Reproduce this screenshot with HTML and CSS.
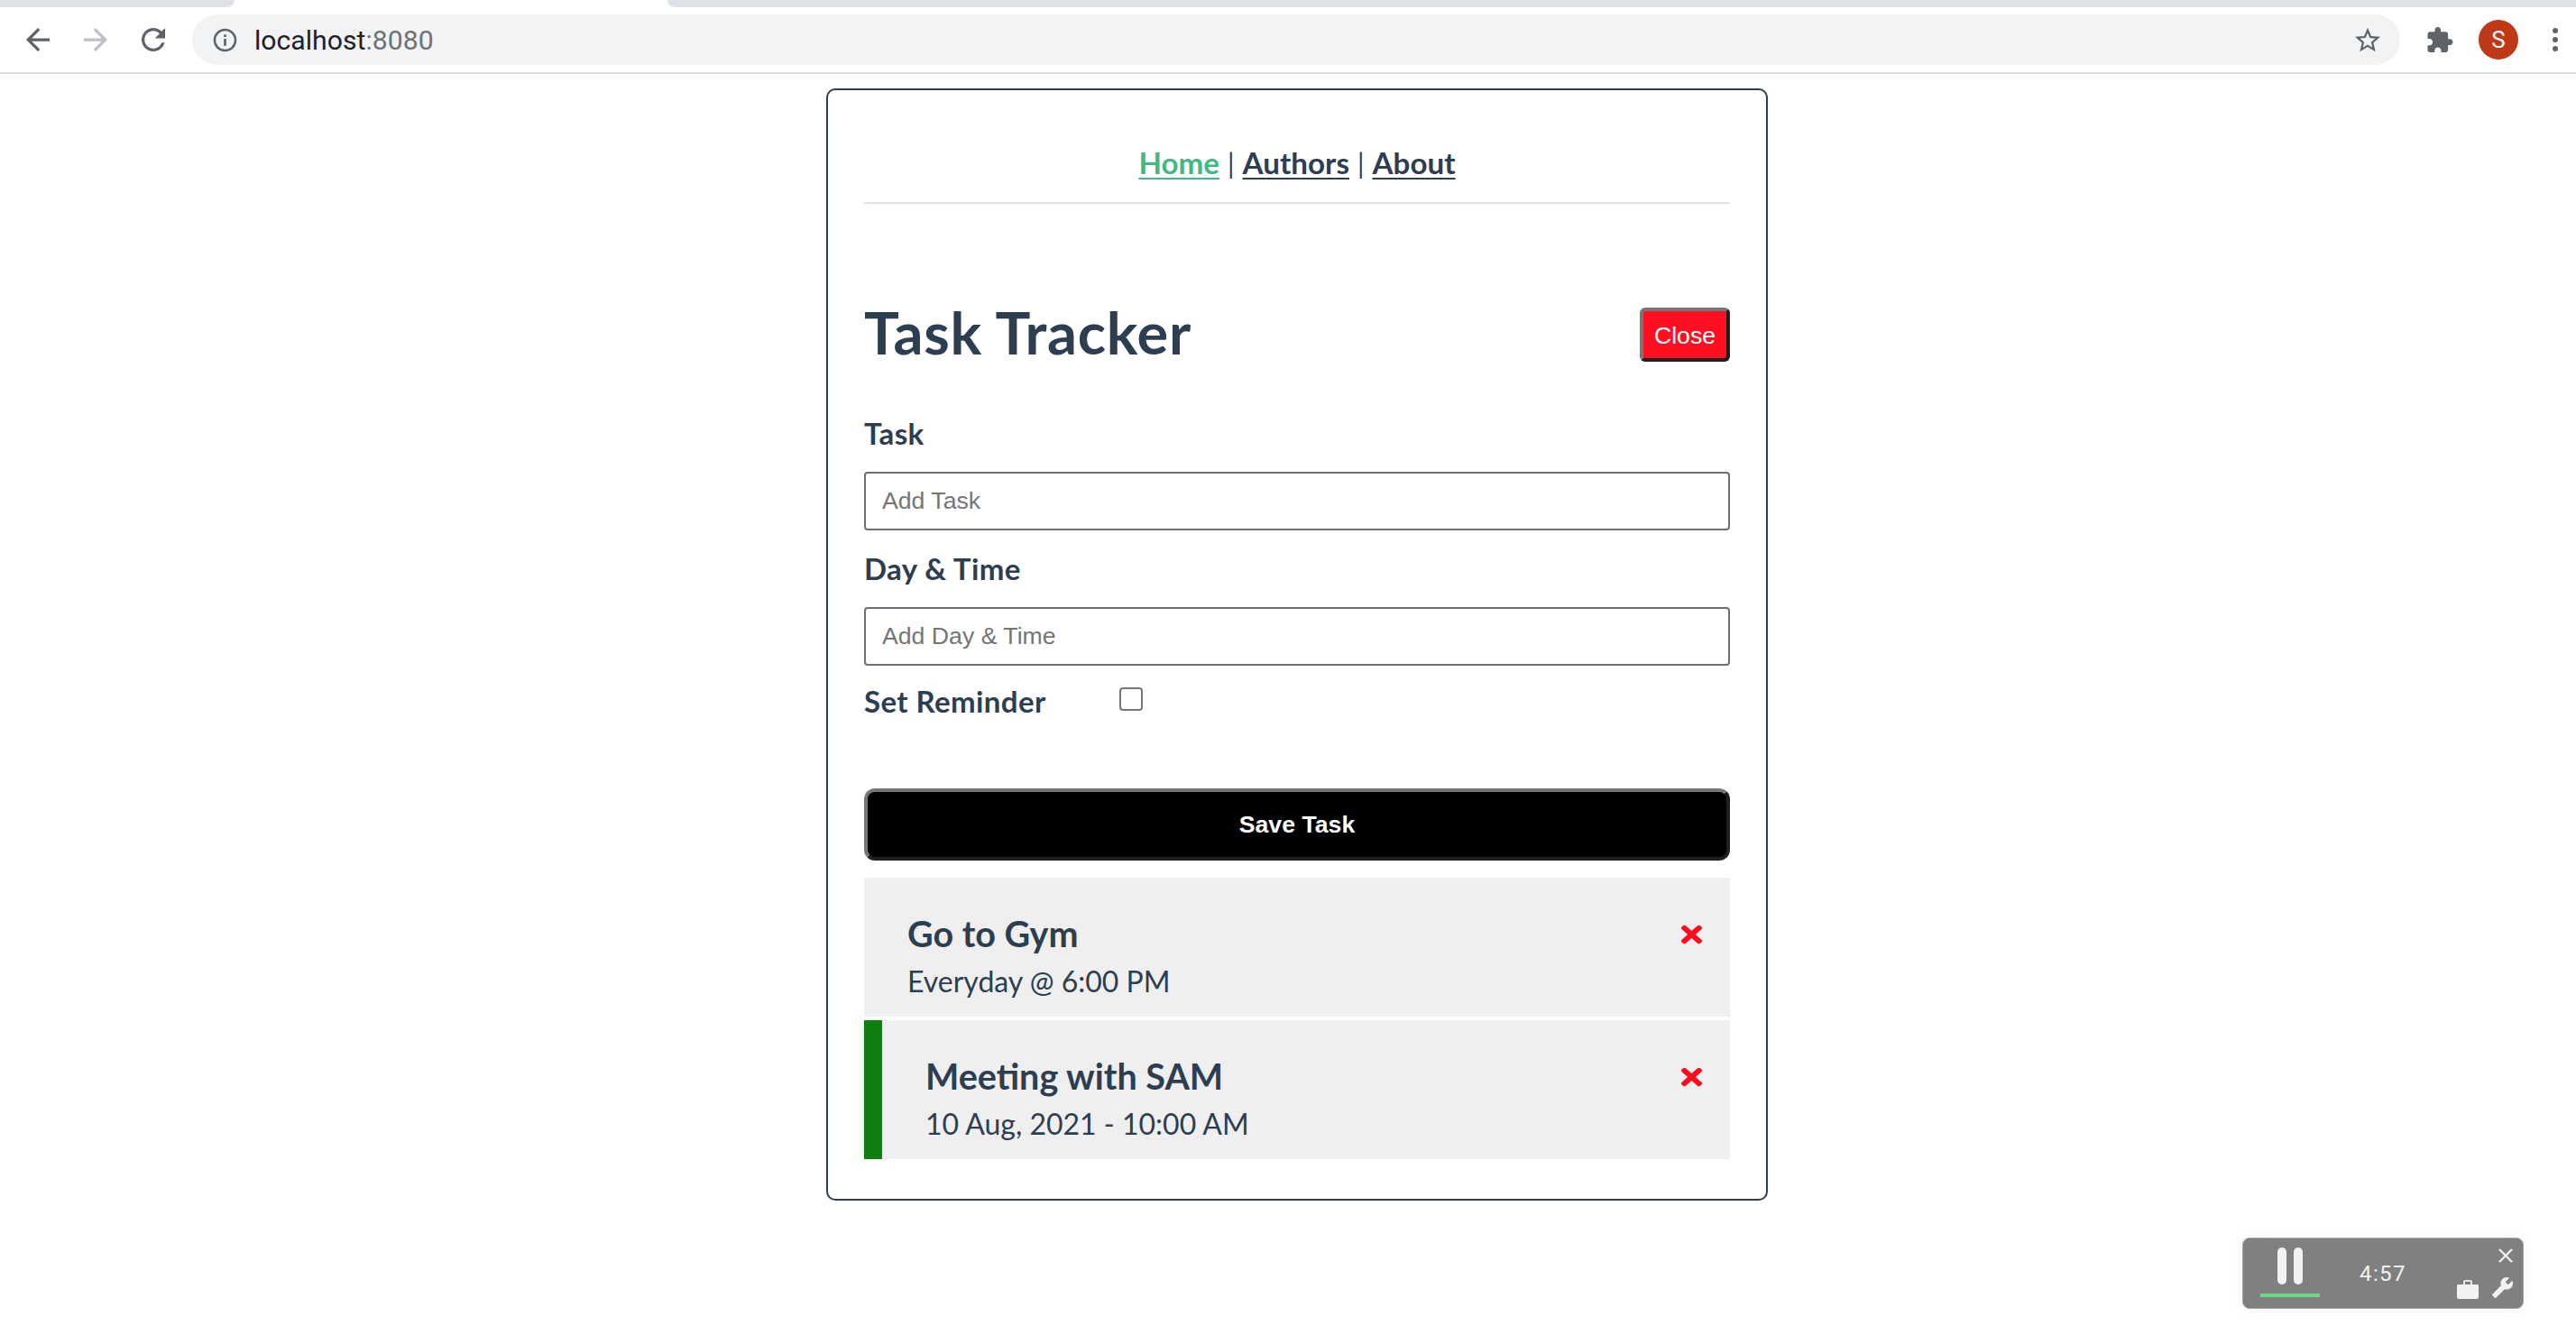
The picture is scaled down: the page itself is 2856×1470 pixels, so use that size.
FILE: index.html
```html
<!DOCTYPE html>
<html lang="en">
<head>
<meta charset="utf-8">
<title>Task Tracker</title>
<link rel="stylesheet" href="styles.css">
</head>
<body>
<header class="browser">
  <div class="tabstrip"><div class="tab-left"></div><div class="tab-active"></div><div class="tab-right"></div></div>
  <div class="toolbar">
    <svg class="tb-icon back" viewBox="4 4 16 16"><path d="M20 11H7.83l5.59-5.59L12 4l-8 8 8 8 1.41-1.41L7.83 13H20v-2z"/></svg>
    <svg class="tb-icon forward" viewBox="4 4 16 16"><path d="M4 11h12.17l-5.59-5.59L12 4l8 8-8 8-1.41-1.41L16.17 13H4v-2z"/></svg>
    <svg class="tb-icon reload" viewBox="4 4 16 16"><path d="M17.65 6.35C16.2 4.9 14.21 4 12 4c-4.42 0-7.99 3.58-7.99 8s3.57 8 7.99 8c3.73 0 6.84-2.55 7.73-6h-2.08c-.82 2.33-3.04 4-5.65 4-3.31 0-6-2.69-6-6s2.69-6 6-6c1.66 0 3.14.69 4.22 1.78L13 11h7V4l-2.35 2.35z"/></svg>
    <div class="omnibox">
      <svg class="info" viewBox="0 0 28 28"><circle cx="14" cy="14" r="12" fill="none" stroke="#5f6368" stroke-width="2.6"/><rect x="12.6" y="12.4" width="2.8" height="8" fill="#5f6368"/><rect x="12.6" y="7.6" width="2.8" height="2.8" fill="#5f6368"/></svg>
      <span class="url">localhost<span class="port">:8080</span></span>
      <svg class="star" viewBox="2 2 20 19"><path d="M22 9.24l-7.19-.62L12 2 9.19 8.63 2 9.24l5.46 4.73L5.82 21 12 17.27 18.18 21l-1.63-7.03L22 9.24zM12 15.4l-3.76 2.27 1-4.28-3.32-2.88 4.38-.38L12 6.1l1.71 4.04 4.38.38-3.32 2.88 1 4.28L12 15.4z"/></svg>
    </div>
    <svg class="puzzle" viewBox="2 1 21 21"><path d="M20.5 11H19V7c0-1.1-.9-2-2-2h-4V3.5C13 2.12 11.88 1 10.5 1S8 2.12 8 3.5V5H4c-1.1 0-1.99.9-1.99 2v3.8H3.5c1.49 0 2.7 1.21 2.7 2.7s-1.21 2.7-2.7 2.7H2V20c0 1.1.9 2 2 2h3.8v-1.5c0-1.49 1.21-2.7 2.7-2.7 1.49 0 2.7 1.21 2.7 2.7V22H17c1.1 0 2-.9 2-2v-4h1.5c1.38 0 2.5-1.12 2.5-2.5S21.88 11 20.5 11z"/></svg>
    <div class="avatar">S</div>
    <div class="dots"><i></i><i></i><i></i></div>
  </div>
</header>

<main class="page">
  <section class="card">
    <nav class="nav">
      <a class="nav-link active" href="#">Home</a><span class="sep">|</span><a class="nav-link" href="#">Authors</a><span class="sep">|</span><a class="nav-link" href="#">About</a>
    </nav>
    <hr class="rule">
    <div class="title-row">
      <h1 class="title">Task Tracker</h1>
      <button class="btn-close">Close</button>
    </div>
    <form class="form">
      <label class="label label-task" for="task">Task</label>
      <input class="field field-task" id="task" placeholder="Add Task">
      <label class="label label-day" for="day">Day &amp; Time</label>
      <input class="field field-day" id="day" placeholder="Add Day &amp; Time">
      <div class="check-row">
        <label class="label" for="rem">Set Reminder</label>
        <input class="check" id="rem" type="checkbox">
      </div>
      <button class="btn-save" type="button">Save Task</button>
    </form>
    <ul class="tasks">
      <li class="task">
        <div class="task-head"><h3 class="task-name">Go to Gym</h3>
          <svg class="remove" viewBox="0 0 352 512" preserveAspectRatio="none"><path d="M242.72 256l100.07-100.07c12.28-12.28 12.28-32.19 0-44.48l-22.24-22.24c-12.28-12.28-32.19-12.28-44.48 0L176 189.28 75.93 89.21c-12.28-12.28-32.19-12.28-44.48 0L9.21 111.45c-12.28 12.28-12.28 32.19 0 44.48L109.28 256 9.21 356.07c-12.28 12.28-12.28 32.19 0 44.48l22.24 22.24c12.28 12.28 32.2 12.28 44.48 0L176 322.72l100.07 100.07c12.28 12.28 32.2 12.28 44.48 0l22.24-22.24c12.28-12.28 12.28-32.19 0-44.48L242.72 256z"/></svg>
        </div>
        <p class="task-day">Everyday @ 6:00 PM</p>
      </li>
      <li class="task reminder">
        <div class="task-head"><h3 class="task-name">Meeting with SAM</h3>
          <svg class="remove" viewBox="0 0 352 512" preserveAspectRatio="none"><path d="M242.72 256l100.07-100.07c12.28-12.28 12.28-32.19 0-44.48l-22.24-22.24c-12.28-12.28-32.19-12.28-44.48 0L176 189.28 75.93 89.21c-12.28-12.28-32.19-12.28-44.48 0L9.21 111.45c-12.28 12.28-12.28 32.19 0 44.48L109.28 256 9.21 356.07c-12.28 12.28-12.28 32.19 0 44.48l22.24 22.24c12.28 12.28 32.2 12.28 44.48 0L176 322.72l100.07 100.07c12.28 12.28 32.2 12.28 44.48 0l22.24-22.24c12.28-12.28 12.28-32.19 0-44.48L242.72 256z"/></svg>
        </div>
        <p class="task-day">10 Aug, 2021 - 10:00 AM</p>
      </li>
    </ul>
  </section>
</main>

<aside class="timer">
  <div class="timer-pause"><div class="bars"><i></i><i></i></div><div class="progress"></div></div>
  <div class="timer-time">4:57</div>
  <div class="timer-tools">
    <svg class="timer-x" viewBox="0 0 16 16"><path d="M1 1L15 15M15 1L1 15" stroke="#f2f2f2" stroke-width="2.4" fill="none"/></svg>
    <div class="timer-row">
      <svg class="case" viewBox="0 0 24 22"><path d="M1.5 6H7V3.4C7 2 8 1 9.4 1h5.2C16 1 17 2 17 3.4V6h5.5c.8 0 1.5.7 1.5 1.5V20c0 1.100-.9 2-2 2H2c-1.100 0-2-.9-2-2V7.500C0 6.700.7 6 1.500 6zM8.800 6h6.400V3.600c0-.5-.3-.8-.8-.8H9.600c-.5 0-.8.3-.8.8V6z" fill-rule="evenodd"/></svg>
      <svg class="wrench" viewBox="1 1 23 23"><g transform="matrix(-1 0 0 1 25 0)"><path d="M22.700 19l-9.100-9.100c.9-2.300.4-5-1.500-6.900-2-2-5-2.400-7.400-1.300L9 6 6 9 1.600 4.700C.4 7.100.9 10.100 2.900 12.100c1.900 1.900 4.600 2.400 6.900 1.500l9.100 9.100c.4.400 1 .4 1.400 0l2.300-2.300c.5-.4.5-1.100.1-1.400z"/></g></svg>
    </div>
  </div>
</aside>
</body>
</html>
```
FILE: styles.css
```css
* { box-sizing: border-box; }
html, body { margin: 0; height: 100%; }
body { background: #fff; overflow: hidden; font-family: Lato, "Noto Sans", sans-serif; color: #2c3e50; }

.browser { height: 82px; border-bottom: 2px solid #dcdce1; background: #fff; }
.tabstrip { height: 8px; display: flex; background: #fff; }
.tab-left { width: 260px; background: #dee1e6; border-bottom-right-radius: 10px; }
.tab-active { width: 480px; }
.tab-right { flex: 1; background: #dee1e6; border-bottom-left-radius: 10px; }
.toolbar { height: 72px; display: flex; align-items: center; position: relative; }
.tb-icon { width: 26px; height: 26px; fill: #5f6368; flex: none; }
.back { margin-left: 29px; }
.forward { margin-left: 38px; fill: #bdc1c6; }
.reload { margin-left: 38px; }
.omnibox { width: 2448px; height: 56px; margin-left: 30px; background: #f1f3f4; border-radius: 28px; display: flex; align-items: center; padding: 0 22px 0 23px; }
.info { width: 27px; height: 27px; flex: none; }
.url { margin-left: 19px; font: 400 30.2px Roboto, sans-serif; color: #202124; }
.port { color: #6f7275; }
.star { width: 28px; height: 28px; margin-left: auto; fill: #5f6368; flex: none; }
.puzzle { width: 29px; height: 28px; margin-left: 30px; fill: #5f6368; flex: none; }
.avatar { width: 44px; height: 44px; margin-left: 28px; border-radius: 50%; background: #bf3817; color: #fff; font: 400 26px Roboto, sans-serif; display: flex; align-items: center; justify-content: center; flex: none; }
.dots { margin-left: 38px; display: flex; flex-direction: column; gap: 4px; flex: none; }
.dots i { display: block; width: 6px; height: 6px; border-radius: 50%; background: #5f6368; }

.page { display: flex; justify-content: center; padding: 16px 0 0 20px; }
.card { width: 1044px; height: 1233px; border: 2px solid #2c3e50; border-radius: 10px; padding: 58px 40px 0; }
.nav { height: 44px; display: flex; justify-content: center; align-items: baseline; font-size: 33.2px; line-height: 44px; }
.nav-link { color: #2c3e50; text-decoration: underline; text-decoration-thickness: 2px; text-underline-offset: 4px; font-weight: 700; }
.nav-link.active { color: #42b983; }
.sep { font-size: 30px; font-weight: 400; margin: 0 9px; }
.rule { height: 2px; margin: 22px 0 0; border: 0; background: #e3e3e5; }
.title-row { height: 179px; margin-top: 55px; display: flex; justify-content: space-between; align-items: center; }
.title { margin: 0 0 6px; font-size: 65px; line-height: 76px; font-weight: 700; letter-spacing: .7px; }
.btn-close { width: 100px; height: 60px; padding: 4px 0 0; background: #ff0f1f; color: #fff; border: 4px solid; border-color: #767676 #1f1f1f #1f1f1f #767676; border-radius: 6px; font: 400 26.67px "Liberation Sans", Arial, sans-serif; }
.form { display: block; }
.label { display: block; font-size: 33px; line-height: 40px; font-weight: 700; letter-spacing: .4px; }
.field { display: block; width: 100%; height: 65px; margin-top: 23px; padding: 0 18px; border: 2px solid #6f6f6f; border-radius: 4px; background: #fff; font: 400 26.67px "Liberation Sans", Arial, sans-serif; }
.field::placeholder { color: #757575; opacity: 1; }
.label-day { margin-top: 22px; }
.check-row { display: flex; align-items: flex-start; margin-top: 19px; }
.check-row .label { width: 283px; }
.check { appearance: none; width: 26px; height: 26px; margin: 5px 0 0; border: 2px solid #767676; border-radius: 4px; background: #fff; }
.btn-save { display: block; width: 100%; height: 80px; margin-top: 77px; background: #000; color: #fff; border: 4px solid; border-color: #767676 #1f1f1f #1f1f1f #767676; border-radius: 12px; font: 700 26.67px "Liberation Sans", Arial, sans-serif; }
.tasks { list-style: none; margin: 19px 0 0; padding: 0; display: flex; flex-direction: column; gap: 4px; }
.task { height: 154px; background: #efefef; padding: 39px 31px 0 48px; }
.task.reminder { border-left: 20px solid #107f10; }
.task-head { display: flex; justify-content: space-between; align-items: center; }
.task-name { margin: 0; font-size: 39.5px; line-height: 46px; font-weight: 700; }
.remove { width: 23px; height: 30px; margin-top: 2px; fill: #ff0a1e; flex: none; }
.task-day { margin: 8px 0 0; font-size: 32px; line-height: 44px; font-weight: 400; }

.timer { position: absolute; left: 2486px; top: 1372px; width: 312px; height: 79px; display: flex; background: #808080; border: 1px solid #a4a4a4; border-radius: 8px; box-shadow: 0 0 14px rgba(0, 0, 0, .05); }
.timer-pause { width: 86px; margin-left: 19px; padding-top: 10px; }
.bars { width: 66px; display: flex; justify-content: center; gap: 8px; }
.bars i { display: block; width: 10px; height: 41px; border-radius: 5px; background: #f2f2f2; }
.progress { width: 66px; height: 4px; margin-top: 10px; background: #6fd884; }
.timer-time { margin-left: 24px; padding-top: 25px; font: 400 24px/28px Roboto, sans-serif; letter-spacing: 1.4px; color: #f2f2f2; }
.timer-tools { margin-left: auto; padding: 11px 11px 0 0; display: flex; flex-direction: column; align-items: flex-end; }
.timer-x { width: 16px; height: 16px; }
.timer-row { display: flex; align-items: flex-end; gap: 14px; margin-top: 16px; }
.case { width: 24px; height: 22px; fill: #f2f2f2; }
.wrench { width: 24px; height: 24px; fill: #f2f2f2; }
```
